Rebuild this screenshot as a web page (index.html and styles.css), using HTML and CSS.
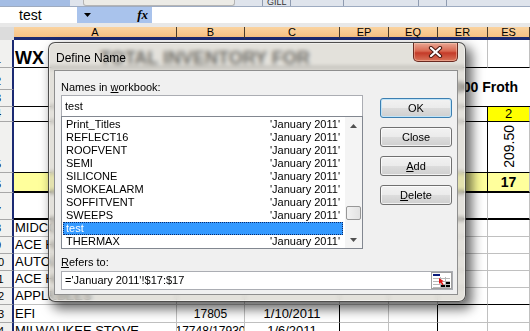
FILE: index.html
```html
<!DOCTYPE html>
<html lang="en">
  <head>
    <meta charset="UTF-8" />
    <title>Define Name</title>
    <link rel="stylesheet" href="styles.css">
  </head>
  <body>
    <div class="tabstrip">
      <span class="tab tab-blue"></span>
      <span class="tab tab-box"></span>
      <span class="tab tab-sep"></span>
      <span class="tab tab-name">GILL</span>
      <span class="tab tab-sep wide"></span>
      <span class="tab tab-sep wider"></span>
      <span class="tab tab-sep"></span>
    </div>

    <div class="formula-bar">
      <div class="name-box">test</div>
      <div class="name-tools">
        <svg class="drop" width="7" height="4" viewBox="0 0 7 4"><polygon points="0,0 7,0 3.5,4" fill="#000"/></svg>
        <span class="fx">fx</span>
      </div>
      <div class="formula"></div>
    </div>
    <div class="band"></div>

    <div class="sheet">
      <!-- column headers -->
      <div class="corner"></div>
      <div class="hd">A</div>
      <div class="hd">B</div>
      <div class="hd">C</div>
      <div class="hd">EP</div>
      <div class="hd">EQ</div>
      <div class="hd">ER</div>
      <div class="hd">ES</div>

      <!-- row 1 -->
      <div class="rh"><span>1</span></div>
      <div class="c title black-b"><span>WX</span><span class="title-rest">TOTAL INVENTORY FOR</span></div>
      <div class="c black-b"></div>

      <!-- rows 2-3 -->
      <div class="rh"><span>2</span></div>
      <div class="c froth black-b">LOCATION 1000 Froth</div>
      <div class="rh"><span>3</span></div>

      <!-- row 4 -->
      <div class="rh"><span>4</span></div>
      <div class="c black-b"></div>
      <div class="c black-b"></div>
      <div class="c black-b"></div>
      <div class="c black-b"></div>
      <div class="c black-b"></div>
      <div class="c black-b black-r"></div>
      <div class="c black-b yellow center">2</div>

      <!-- row 5 -->
      <div class="rh"><span>5</span></div>
      <div class="c black-b"></div>
      <div class="c black-b"></div>
      <div class="c black-b"></div>
      <div class="c black-b"></div>
      <div class="c black-b"></div>
      <div class="c black-b black-r"></div>
      <div class="c black-b center"><span class="vert">209.50</span></div>

      <!-- row 6 -->
      <div class="rh"><span>6</span></div>
      <div class="c pale thick-b"></div>
      <div class="c pale thick-b"></div>
      <div class="c pale thick-b"></div>
      <div class="c pale thick-b"></div>
      <div class="c pale thick-b"></div>
      <div class="c pale thick-b black-r"></div>
      <div class="c pale thick-b center bold">17</div>

      <!-- row 7 -->
      <div class="rh"><span>7</span></div>
      <div class="c thick-b"></div>
      <div class="c thick-b"></div>
      <div class="c thick-b"></div>
      <div class="c thick-b"></div>
      <div class="c thick-b"></div>
      <div class="c thick-b"></div>
      <div class="c thick-b"></div>

      <!-- rows 8-12 -->
      <div class="rh"><span>8</span></div>
      <div class="c name">MIDCOUNTRY</div>
      <div class="c"></div><div class="c"></div><div class="c"></div><div class="c"></div><div class="c"></div><div class="c"></div>

      <div class="rh"><span>9</span></div>
      <div class="c name">ACE HARDWARE</div>
      <div class="c"></div><div class="c"></div><div class="c"></div><div class="c"></div><div class="c"></div><div class="c"></div>

      <div class="rh"><span>10</span></div>
      <div class="c name">AUTOZONE</div>
      <div class="c"></div><div class="c"></div><div class="c"></div><div class="c"></div><div class="c"></div><div class="c"></div>

      <div class="rh"><span>11</span></div>
      <div class="c name">ACE HARDWARE</div>
      <div class="c"></div><div class="c"></div><div class="c"></div><div class="c"></div><div class="c"></div><div class="c"></div>

      <div class="rh"><span>12</span></div>
      <div class="c name">APPLEBEES</div>
      <div class="c"></div><div class="c"></div><div class="c"></div><div class="c"></div>
      <div class="c black-b"></div><div class="c black-b"></div>

      <!-- rows 13-14 -->
      <div class="rh"><span>13</span></div>
      <div class="c name">EFI</div>
      <div class="c center num">17805</div>
      <div class="c center black-r">1/10/2011</div>
      <div class="c"></div>
      <div class="c black-r"></div>
      <div class="c"></div>
      <div class="c"></div>

      <div class="rh"><span>14</span></div>
      <div class="c name">MILWAUKEE STOVE</div>
      <div class="c center num">17748/17930</div>
      <div class="c center black-r">1/6/2011</div>
      <div class="c"></div>
      <div class="c black-r"></div>
      <div class="c"></div>
      <div class="c"></div>
    </div>

    <div class="dialog">
      <div class="titlebar">
        <span class="title">Define Name</span>
        <span class="close-btn">
          <svg width="15" height="12" viewBox="0 0 15 12">
            <path d="M3 2L12 10M12 2L3 10" stroke="#4a1a12" stroke-width="4.2" stroke-linecap="round"/>
            <path d="M3 2L12 10M12 2L3 10" stroke="#fff" stroke-width="2.2" stroke-linecap="round"/>
          </svg>
        </span>
      </div>

      <div class="client">
        <div class="main-row">
          <div class="names">
            <span class="lbl">Names in <u>w</u>orkbook:</span>
            <div class="field">test</div>
            <div class="listbox">
              <ul class="items">
                <li><span>Print_Titles</span><span>'January 2011'</span></li>
                <li><span>REFLECT16</span><span>'January 2011'</span></li>
                <li><span>ROOFVENT</span><span>'January 2011'</span></li>
                <li><span>SEMI</span><span>'January 2011'</span></li>
                <li><span>SILICONE</span><span>'January 2011'</span></li>
                <li><span>SMOKEALARM</span><span>'January 2011'</span></li>
                <li><span>SOFFITVENT</span><span>'January 2011'</span></li>
                <li><span>SWEEPS</span><span>'January 2011'</span></li>
                <li class="selected"><span>test</span></li>
                <li><span>THERMAX</span><span>'January 2011'</span></li>
              </ul>
              <div class="scrollbar">
                <div class="arrow">
                  <svg width="7" height="4" viewBox="0 0 7 4"><polygon points="0,4 7,4 3.5,0" fill="#505050"/></svg>
                </div>
                <div class="track"><div class="thumb"></div></div>
                <div class="arrow">
                  <svg width="7" height="4" viewBox="0 0 7 4"><polygon points="0,0 7,0 3.5,4" fill="#505050"/></svg>
                </div>
              </div>
            </div>
          </div>

          <div class="actions">
            <button class="btn default">OK</button>
            <button class="btn">Close</button>
            <button class="btn"><u>A</u>dd</button>
            <button class="btn"><u>D</u>elete</button>
          </div>
        </div>

        <span class="lbl refers-lbl"><u>R</u>efers to:</span>
        <div class="field refers">
          <span>='January 2011'!$17:$17</span>
          <span class="ref-btn">
            <svg width="19" height="15" viewBox="0 0 19 15">
              <path d="M1 5.5H18M1 8.5H18M1 11.5H18M1 14.5H18M8.5 4V15M13.5 4V15" stroke="#b8b8b8" stroke-width="1"/>
              <rect x="1" y="1" width="7" height="2" fill="#0b1b7c"/>
              <rect x="14" y="9" width="4" height="2" fill="#000"/>
              <rect x="9" y="12" width="4" height="2" fill="#000"/>
              <rect x="14" y="12" width="4" height="2" fill="#000"/>
              <path d="M7 5L7 11L8.6 9.6L10.4 12.2L11.6 11.3L9.8 8.8L11.8 8.3Z" fill="#e01414"/>
            </svg>
          </span>
        </div>
      </div>
    </div>
  </body>
</html>
```

FILE: styles.css
```css
* {
  box-sizing: border-box;
}

body {
  margin: 0;
  width: 530px;
  height: 331px;
  overflow: hidden;
  position: relative;
  background: #fff;
  font-family: "Liberation Sans", Arial, sans-serif;
  color: #000;
}

/* top toolbar strip */
.tabstrip {
  display: flex;
  height: 7px;
  background: #dfe4ec;
  border-bottom: 1px solid #9eabc0;
}

.tab-blue {
  width: 70px;
  background: #a4bde4;
}

.tab-box {
  width: 152px;
  margin-left: 13px;
  background: #ecebe6;
  border: 1px solid #b5b5b5;
  border-top: none;
  border-radius: 0 0 3px 3px;
}

.tab-sep {
  width: 28px;
  border-right: 1px solid #8f9bb0;
}

.tab-sep.wide {
  width: 53px;
}

.tab-sep.wider {
  width: 75px;
}

.tab-name {
  width: 28px;
  padding-left: 4px;
  font-size: 9px;
  line-height: 4px;
  overflow: hidden;
  color: #333;
  border-right: 1px solid #8f9bb0;
}

/* formula bar */
.formula-bar {
  display: flex;
  height: 16px;
  background: #fff;
}

.name-box {
  width: 77px;
  padding-left: 19px;
  font-size: 14px;
  line-height: 16px;
}

.name-tools {
  width: 75px;
  display: flex;
  align-items: center;
  background: #a9c3ec;
}

.drop {
  margin-left: 7px;
}

.fx {
  margin-left: auto;
  margin-right: 4px;
  font-family: "Liberation Serif", serif;
  font-style: italic;
  font-weight: bold;
  font-size: 13px;
}

.band {
  height: 4px;
  background: #e8e8e8;
}

/* worksheet */
.sheet {
  display: grid;
  grid-template-columns: 14px 163px 68px 95px 49px 49px 50px 42px;
  grid-template-rows: 13px 28px 22px 17px 15px 51px 20px 27px 17px 17px 17px 17px 17px 18px 17px;
}

.corner {
  background: #dcdcdc;
  border-bottom: 3px solid #dcdcdc;
}

.hd {
  display: flex;
  justify-content: center;
  align-items: center;
  font-size: 11px;
  background: linear-gradient(#fad3a0, #f7c283);
  border-right: 1px solid #4a3c2c;
  border-bottom: 3px solid #1b2a73;
}

.rh {
  display: flex;
  align-items: flex-end;
  padding-bottom: 2px;
  overflow: hidden;
  font-size: 11px;
  background: #f1f1ef;
  border-right: 2px solid #1b2a73;
  border-bottom: 1px solid #a8a8a8;
}

.rh span {
  flex: none;
  width: 26px;
  margin-left: -15px;
  text-align: center;
}

.c {
  display: flex;
  align-items: flex-end;
  padding: 0 2px 1px;
  overflow: hidden;
  white-space: nowrap;
  font-size: 13px;
  border-right: 1px solid #c0c0c0;
  border-bottom: 1px solid #c0c0c0;
}

.c.title {
  grid-column: span 6;
  align-items: center;
  padding-left: 1px;
  font-size: 18px;
  font-weight: bold;
}

.title-rest {
  margin-left: 56px;
}

.c.froth {
  grid-column: 2 / 9;
  grid-row: span 2;
  align-items: center;
  justify-content: flex-end;
  padding-right: 12px;
  font-size: 14px;
  font-weight: bold;
  border-right: none;
}

.c.name {
  padding-left: 1px;
}

.c.num {
  font-size: 12px;
}

.center {
  justify-content: center;
}

.c.center {
  align-items: center;
}

.c.num,
.c.center.black-r {
  align-items: flex-end;
}

.bold {
  font-weight: bold;
  font-size: 14px;
}

.yellow {
  background: #ffff00;
}

.pale {
  background: #ffff9c;
}

.black-b {
  border-bottom-color: #000;
}

.black-r {
  border-right-color: #000;
}

.thick-b {
  border-bottom: 2px solid #000;
}

.vert {
  writing-mode: vertical-rl;
  transform: rotate(180deg);
  font-size: 14px;
}

/* Define Name dialog */
.dialog {
  position: absolute;
  left: 48px;
  top: 42px;
  width: 418px;
  height: 260px;
  border: 1px solid rgba(30, 30, 30, 0.75);
  border-radius: 7px;
  background: rgba(204, 200, 189, 0.55);
  backdrop-filter: blur(2.2px);
  box-shadow: inset 0 0 0 1px rgba(255, 255, 255, 0.45),
    5px 6px 12px 1px rgba(0, 0, 0, 0.6);
  font-size: 11px;
}

.titlebar {
  display: flex;
  align-items: flex-start;
  height: 27px;
}

.title {
  padding: 8px 0 0 7px;
  font-size: 12px;
  line-height: 14px;
}

.close-btn {
  display: flex;
  justify-content: center;
  align-items: center;
  width: 45px;
  height: 19px;
  margin-left: auto;
  margin-right: 7px;
  border: 1px solid #6a2a20;
  border-top: none;
  border-radius: 0 0 5px 5px;
  background: linear-gradient(#e9a894, #d86750 45%, #c43a28 55%, #d8745a);
  box-shadow: inset 0 0 0 1px rgba(255, 210, 190, 0.45);
}

.client {
  display: flex;
  flex-direction: column;
  width: 404px;
  height: 225px;
  margin-left: 5px;
  padding: 9px 0 0 6px;
  background: #f0f0f0;
  border: 1px solid #8e8e8e;
}

.main-row {
  display: flex;
}

.names {
  width: 302px;
}

.lbl {
  display: block;
  height: 15px;
  line-height: 15px;
}

.field {
  height: 22px;
  padding-left: 3px;
  line-height: 20px;
  background: #fff;
  border: 1px solid #abadb3;
}

.listbox {
  display: flex;
  height: 133px;
  margin-top: -1px;
  background: #fff;
  border: 1px solid #828790;
}

.items {
  flex: 1;
  margin: 0;
  padding: 1px 2px 0 1px;
  list-style: none;
}

.items li {
  display: flex;
  justify-content: space-between;
  height: 13px;
  padding: 0 3px;
  line-height: 13px;
}

.items li.selected {
  color: #fff;
  background: #3399ff;
  outline: 1px dotted #0a2a6a;
  outline-offset: -1px;
}

.scrollbar {
  display: flex;
  flex-direction: column;
  width: 17px;
  background: #f4f4f4;
}

.arrow {
  display: flex;
  justify-content: center;
  align-items: center;
  height: 17px;
}

.track {
  flex: 1;
}

.thumb {
  width: 15px;
  height: 14px;
  margin: 72px 0 0 1px;
  border: 1px solid #979797;
  border-radius: 2px;
  background: linear-gradient(90deg, #f2f2f2, #e2e2e2);
}

.actions {
  display: flex;
  flex-direction: column;
  gap: 9px;
  margin-left: 17px;
  padding-top: 18px;
}

.btn {
  width: 72px;
  height: 20px;
  padding: 0;
  font-family: "Liberation Sans", Arial, sans-serif;
  font-size: 11px;
  color: #000;
  border: 1px solid #707070;
  border-radius: 3px;
  background: linear-gradient(#f2f2f2 0%, #ebebeb 49%, #dddddd 50%, #cfcfcf 100%);
  box-shadow: inset 0 0 0 1px rgba(255, 255, 255, 0.7);
}

.btn.default {
  border-color: #3c7fb1;
  box-shadow: inset 0 0 0 1px #bfe3f7;
}

.refers-lbl {
  margin-top: 6px;
}

.field.refers {
  display: flex;
  align-items: center;
  width: 392px;
  height: 19px;
  margin-top: 1px;
  line-height: 17px;
}

.ref-btn {
  display: flex;
  justify-content: center;
  align-items: center;
  width: 21px;
  height: 17px;
  margin-left: auto;
  background: #fff;
  border: 1px solid #a0a0a0;
}
```
